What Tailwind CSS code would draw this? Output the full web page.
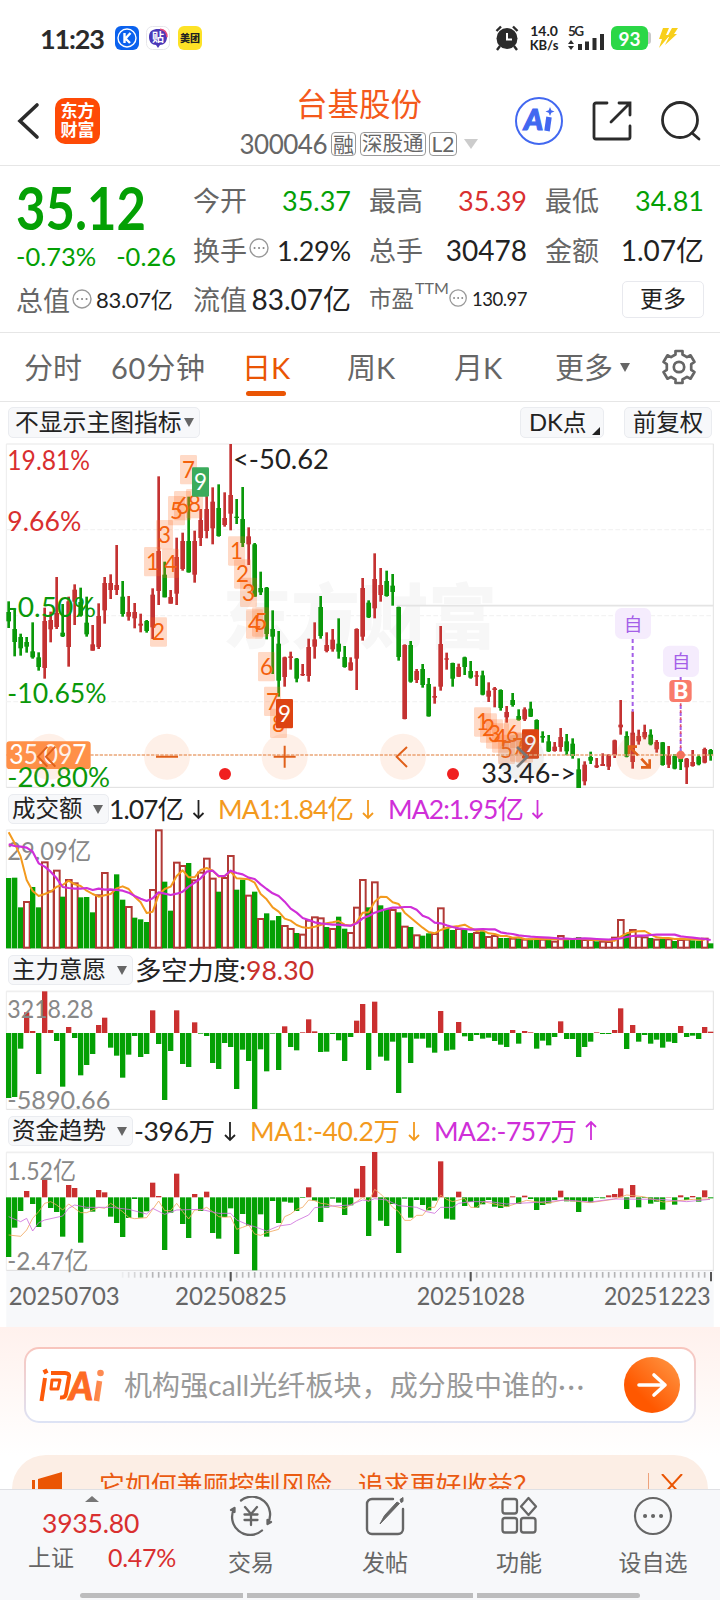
<!DOCTYPE html>
<html lang="zh-CN">

<head>
    <meta charset="UTF-8" />
    <meta name="viewport" content="width=device-width, initial-scale=1.0" />
    <title>台基股份 300046</title>
    <script src="https://cdn.jsdelivr.net/npm/@tailwindcss/browser@4"></script>
</head>

<body class="bg-white">
    <div class="relative flex flex-col w-[720px] h-[1600px] overflow-hidden bg-white text-[#222] font-[family-name:Lato,'Noto_Sans_CJK_SC',sans-serif] leading-none whitespace-nowrap">

        <!-- status bar -->
        <div class="status-bar flex items-center h-[76px] pl-[40px] pr-[41px] shrink-0">
            <span class="text-[27px] font-bold tracking-[-1.200px] w-[75px] text-[#2b2b2b]">11:23</span>
            <svg class="w-6 h-6" viewBox="0 0 24 24">
                <rect width="24" height="24" rx="6" fill="#0b62ee" />
                <circle cx="12" cy="12" r="9" fill="none" stroke="#fff" stroke-width="1.4" />
                <path d="M9.500 7v10M15.500 7l-5 5.500 4.500 4.500" fill="none" stroke="#fff" stroke-width="2.4" />
            </svg>
            <svg class="w-6 h-6 ml-[7px]" viewBox="0 0 24 24">
                <rect x=".5" y=".5" width="23" height="23" rx="6" fill="#fff" stroke="#e6e6ea" />
                <path d="M12 3c5 0 9 2 9 8 0 5-3 8-7 8l-2 3-2-3c-4 0-7-3-7-8 0-6 4-8 9-8z" fill="#4b38b8" />
                <path d="M14 3.200c5 .4 7 3 7 8" fill="none" stroke="#e2477c" stroke-width="1.500" />
                <text x="12" y="15.500" font-size="12" font-weight="700" text-anchor="middle" fill="#fff">贴</text>
            </svg>
            <div class="flex items-center justify-center w-6 h-6 ml-[8px] rounded-[6px] bg-[#fde226] text-[10px] font-black">美团</div>
            <div class="flex items-center ml-auto">
                <svg class="w-6 h-[26px]" viewBox="0 0 24 26">
                    <path d="M1.500 6L6 1.500M22.500 6L18 1.500M5 21l-3 4M19 21l3 4" stroke="#2b2b2b" stroke-width="2.400" />
                    <circle cx="12" cy="13.500" r="10.500" fill="#2b2b2b" />
                    <path d="M12 8v6.500h5" fill="none" stroke="#fff" stroke-width="2" />
                </svg>
                <div class="flex flex-col items-center w-[32px] ml-[9px] text-[14px] leading-[14px] font-bold">
                    <span>14.0</span><span class="text-[13px]">KB/s</span>
                </div>
                <svg class="w-[38px] h-[26px] ml-[8px] overflow-visible" viewBox="0 0 38 26">
                    <text x="0" y="11" font-size="13.500" font-weight="700" fill="#2b2b2b" textLength="16">5G</text>
                    <path d="M0 19l3-4 3 4zM0 21l3 4 3-4z" fill="#2b2b2b" />
                    <path d="M12 19v6M19 16.500v8.500M26.500 13v12M34 9v16" stroke="#2b2b2b" stroke-width="4" />
                </svg>
                <div class="flex items-center ml-[5px]">
                    <div class="flex items-center justify-center w-[37px] h-6 rounded-[6px] bg-[#2bd747] text-white text-[19px] font-bold">93</div>
                    <div class="w-[3px] h-3 bg-[#c9c9c9] rounded-r"></div>
                </div>
                <svg class="w-5 h-5 ml-[8px]" viewBox="0 0 20 20">
                    <path d="M4 0h6L7 7h4L0 20l3-9H0zM13 0h6l-4 6h3L6 17l4-8H8z" fill="#f8cf1b" />
                </svg>
            </div>
        </div>

        <!-- title bar -->
        <header class="relative flex items-center h-[90px] shrink-0 border-b border-[#e6e6e6] pl-[16px] pr-[19px]">
            <svg class="w-[24px] h-[40px]" viewBox="0 0 24 40" fill="none" stroke="#2b2b2b" stroke-width="3.600" stroke-linecap="round">
                <path d="M21 4L4 20l17 16" />
            </svg>
            <div class="flex flex-col items-center justify-center gap-px w-[45px] h-[46px] ml-[15px] rounded-[10px] bg-[#fe4a06] text-white font-bold text-[17px] leading-[18px]">
                <span>东方</span><span>财富</span>
            </div>
            <div class="flex flex-col items-center w-[240px] ml-[139px] mt-px">
                <h1 class="text-[31.500px] leading-[36px] text-[#f4591b]">台基股份</h1>
                <div class="flex items-center mt-[9px] h-[26px] text-[#666]">
                    <span class="text-[26px] mr-[4px] tracking-[-0.500px]">300046</span>
                    <span class="border border-[#999] rounded-[4px] text-[21px] px-px h-6 leading-[21px]">融</span>
                    <span class="border border-[#999] rounded-[4px] text-[20.500px] px-px h-6 leading-[21px] ml-1">深股通</span>
                    <span class="border border-[#999] rounded-[4px] text-[21px] px-[2px] h-6 leading-[22px] ml-[3px]">L2</span>
                    <svg class="w-[14px] h-[10px] ml-[7px]" viewBox="0 0 14 10"><path d="M0 0h14L7 10z" fill="#ccc" /></svg>
                </div>
            </div>
            <svg class="w-[48px] h-[48px] ml-auto" viewBox="0 0 48 48">
                <circle cx="24" cy="24" r="23" fill="none" stroke="#4268f0" stroke-width="2" />
                <text x="9" y="33" font-size="28" font-weight="900" font-style="italic" fill="#4268f0" stroke="#4268f0" stroke-width="1.200" textLength="19" lengthAdjust="spacingAndGlyphs">A</text>
                <path d="M34 20l-2 14" stroke="#4268f0" stroke-width="5.500" />
                <path d="M35 10l1.300 3.200 3.200 1.300-3.200 1.300-1.300 3.200-1.300-3.200-3.200-1.300 3.200-1.300z" fill="#4268f0" />
            </svg>
            <svg class="w-[40px] h-[40px] ml-[29px]" viewBox="0 0 40 40" fill="none" stroke="#2b2b2b" stroke-width="2.800" stroke-linecap="round">
                <path d="M15 2H4a2 2 0 0 0-2 2v32a2 2 0 0 0 2 2h32a2 2 0 0 0 2-2V25M27 2h11v12M37 3L19 21" />
            </svg>
            <svg class="w-[40px] h-[40px] ml-[29px]" viewBox="0 0 40 40" fill="none" stroke="#2b2b2b" stroke-width="2.800" stroke-linecap="round">
                <circle cx="19" cy="19" r="17.500" /><path d="M31 32l7 6" />
            </svg>
        </header>

        <!-- quote -->
        <section class="flex h-[167px] shrink-0 border-b border-[#e6e6e6] pl-[16px] pr-[16px] text-[27px] text-[#666]">
            <div class="w-[160px] mr-[17px]">
                <svg class="block w-[160px] h-[60px] mt-[14px]" viewBox="0 0 160 60">
                    <text x="0" y="50" font-size="60" font-weight="700" fill="#04a004" textLength="130" lengthAdjust="spacingAndGlyphs">35.12</text>
                </svg>
                <div class="flex justify-between items-center h-[30px] mt-[2px] text-[#04a004] text-[25.500px]"><span>-0.73%</span><span>-0.26</span></div>
                <div class="flex items-center h-[40px] mt-[8px]">
                    <span>总值</span>
                    <svg class="w-5 h-5 ml-[2px] mr-[4px] mb-[3px]" viewBox="0 0 20 20"><circle cx="10" cy="10" r="9" fill="none" stroke="#999" stroke-width="1.400" /><path d="M5.500 10h.1M10 10h.1M14.500 10h.1" stroke="#888" stroke-width="2" stroke-linecap="round" /></svg>
                    <span class="text-[22px] tracking-[-0.300px] text-[#222]">83.07亿</span>
                </div>
            </div>
            <div class="w-[158px] mr-[18px]">
                <div class="flex justify-between items-center h-[50px] mt-[9px]"><span>今开</span><span class="text-[#04a004]">35.37</span></div>
                <div class="flex justify-between items-center h-[50px]">
                    <span class="flex items-center">换手<svg class="w-5 h-5 ml-[2px] mb-[4px]" viewBox="0 0 20 20"><circle cx="10" cy="10" r="9" fill="none" stroke="#999" stroke-width="1.400" /><path d="M5.500 10h.1M10 10h.1M14.500 10h.1" stroke="#888" stroke-width="2" stroke-linecap="round" /></svg></span>
                    <span class="text-[#222] tracking-[-0.200px]">1.29%</span>
                </div>
                <div class="flex justify-between items-center h-[48px]"><span>流值</span><span class="text-[#222] text-[28px]">83.07亿</span></div>
            </div>
            <div class="w-[158px] mr-[18px]">
                <div class="flex justify-between items-center h-[50px] mt-[9px]"><span>最高</span><span class="text-[#d92f2f]">35.39</span></div>
                <div class="flex justify-between items-center h-[50px]"><span>总手</span><span class="text-[#222] text-[28px]">30478</span></div>
                <div class="flex items-center h-[48px]">
                    <span class="text-[22.500px]">市盈</span>
                    <span class="text-[16px] mb-[22px] ml-px">TTM</span>
                    <svg class="w-5 h-5 ml-0 mr-[5px] mb-[2px]" viewBox="0 0 20 20"><circle cx="10" cy="10" r="9" fill="none" stroke="#999" stroke-width="1.400" /><path d="M5.500 10h.1M10 10h.1M14.500 10h.1" stroke="#888" stroke-width="2" stroke-linecap="round" /></svg>
                    <span class="text-[18.500px] text-[#222] tracking-[-0.500px]">130.97</span>
                </div>
            </div>
            <div class="flex-1">
                <div class="flex justify-between items-center h-[50px] mt-[9px]"><span>最低</span><span class="text-[#04a004]">34.81</span></div>
                <div class="flex justify-between items-center h-[50px]"><span>金额</span><span class="text-[#222] text-[28px]">1.07亿</span></div>
                <div class="flex items-center justify-center w-[82px] h-[37px] ml-auto mt-[6px] pb-[2px] border border-[#e8e9ee] rounded-[5px] text-[23px] text-[#222]">更多</div>
            </div>
        </section>

        <!-- period tabs -->
        <nav class="relative flex items-center h-[69px] shrink-0 border-b border-[#e6e6e6] pl-[24px] text-[29px] text-[#666]">
            <span class="w-[87px]">分时</span>
            <span class="w-[131px] tracking-[0.800px]">60分钟</span>
            <span class="relative w-[105px] text-[#ea5504]">日K<i class="absolute left-[4px] top-[38px] w-10 h-[5px] rounded-full bg-[#ea5504]"></i></span>
            <span class="w-[107px]">周K</span>
            <span class="w-[101px]">月K</span>
            <span class="flex items-center w-[106px]">更多<svg class="w-[10px] h-[9px] ml-[7px]" viewBox="0 0 10 9"><path d="M0 0h10L5 9z" fill="#666" /></svg></span>
            <svg class="w-[36px] h-[36px]" viewBox="0 0 36 36" fill="none" stroke="#666" stroke-width="2.700" stroke-linejoin="round">
                <path d="M14.500 2h7v3.500l4.500 2.600 3.500-1.800 4 6.700-3.300 2.200v5.600l3.300 2.200-4 6.700-3.500-1.800-4.500 2.600V34h-7v-3.500L10 27.900l-3.500 1.800-4-6.700 3.300-2.200v-5.600L2.500 13l4-6.700L10 8.100l4.500-2.600z" />
                <circle cx="18" cy="18" r="5.200" />
            </svg>
        </nav>

        <!-- chart toolbar -->
        <div class="flex items-center h-[38px] shrink-0 px-2 pt-[5px] pb-[2px] text-[23.800px]">
            <div class="flex items-center w-[192px] h-[31px] pl-[6px] border border-[#eaecf0] rounded-[5px] bg-[#f7f8fa]">不显示主图指标<svg class="w-[10px] h-[9px] ml-[2px]" viewBox="0 0 10 9"><path d="M0 0h10L5 9z" fill="#666" /></svg></div>
            <div class="flex items-center w-[84px] h-[31px] ml-auto pl-[8px] border border-[#eaecf0] rounded-[5px] bg-[#f7f8fa]">DK点<svg class="w-2 h-2 ml-[5px] mt-[17px]" viewBox="0 0 8 8"><path d="M8 0v8H0z" fill="#222" /></svg></div>
            <div class="flex items-center justify-center w-[88px] h-[31px] ml-5 border border-[#eaecf0] rounded-[5px] bg-[#f7f8fa] text-[23.500px]">前复权</div>
        </div>

        <!-- candles, drawn at three units to the pixel -->
        <svg id="price" class="block w-[720px] h-[350px] shrink-0" viewBox="0 30 2160 1050"></svg>

        <div class="flex items-center h-[36px] shrink-0 pl-2 pt-[2px] text-[26.500px]">
            <div class="flex items-center justify-between w-[101px] h-[30px] pl-[3px] pr-[5px] border border-[#eaecf0] rounded-[5px] bg-[#f7f8fa] text-[23.500px]">成交额<svg class="w-[10px] h-[9px]" viewBox="0 0 10 9"><path d="M0 0h10L5 9z" fill="#666" /></svg></div>
            <svg class="w-[600px] h-[36px] overflow-visible" viewBox="109 0 600 36">
                <text x="109" y="28" textLength="75" fill="#222">1.07亿</text>
                <text x="218" y="28" textLength="136" fill="#f39a1e">MA1:1.84亿</text>
                <text x="388" y="28" textLength="136" fill="#cf2fd8">MA2:1.95亿</text>
                <g fill="none" stroke-width="1.800">
                    <path d="M198.500 9v18M193.500 22l5 5 5-5" stroke="#222" />
                    <path d="M368 9v18M363 22l5 5 5-5" stroke="#f39a1e" />
                    <path d="M537.500 9v18M532.500 22l5 5 5-5" stroke="#cf2fd8" />
                </g>
            </svg>
        </div>
        <svg id="volume" class="block w-[720px] h-[124px] shrink-0" viewBox="0 108 2160 372"></svg>

        <div class="flex items-center h-[37px] shrink-0 pl-2 pt-[3px] text-[26.500px]">
            <div class="flex items-center justify-between w-[125px] h-[30px] pl-[3px] pr-[5px] border border-[#eaecf0] rounded-[5px] bg-[#f7f8fa] text-[23.500px]">主力意愿<svg class="w-[10px] h-[9px]" viewBox="0 0 10 9"><path d="M0 0h10L5 9z" fill="#666" /></svg></div>
            <svg class="w-[500px] h-[36px] overflow-visible" viewBox="133 0 500 36">
                <text x="135" y="28" textLength="111" fill="#222">多空力度:</text>
                <text x="246" y="28" textLength="68" fill="#c9302c">98.30</text>
            </svg>
        </div>
        <svg id="force" class="block w-[720px] h-[125px] shrink-0" viewBox="0 111 2160 375"></svg>

        <div class="flex items-center h-[36px] shrink-0 pl-2 pt-[2px] text-[26.500px]">
            <div class="flex items-center justify-between w-[125px] h-[30px] pl-[3px] pr-[5px] border border-[#eaecf0] rounded-[5px] bg-[#f7f8fa] text-[23.500px]">资金趋势<svg class="w-[10px] h-[9px]" viewBox="0 0 10 9"><path d="M0 0h10L5 9z" fill="#666" /></svg></div>
            <svg class="w-[580px] h-[36px] overflow-visible" viewBox="133 0 580 36">
                <text x="134" y="28" textLength="81" fill="#222">-396万</text>
                <text x="250" y="28" textLength="150" fill="#f39a1e">MA1:-40.2万</text>
                <text x="434" y="28" textLength="143" fill="#cf2fd8">MA2:-757万</text>
                <g fill="none" stroke-width="1.800">
                    <path d="M230 9v18M225 22l5 5 5-5" stroke="#222" />
                    <path d="M414 9v18M409 22l5 5 5-5" stroke="#f39a1e" />
                    <path d="M591 27V9M586 14l5-5 5 5" stroke="#cf2fd8" />
                </g>
            </svg>
        </div>
        <svg id="fund" class="block w-[720px] h-[179px] shrink-0" viewBox="0 84 2160 537"></svg>

        <!-- ask AI -->
        <section class="h-[128px] shrink-0 px-6 pt-[20px] bg-linear-to-b from-[#fff1ed] to-white">
            <div class="h-[76px] rounded-[15px] p-[2px] bg-linear-to-b from-[#f8c5bd] to-[#dde3f5]">
                <div class="flex items-center h-full rounded-[13px] bg-white pl-[12px] pr-[14px]">
                    <svg class="w-[68px] h-[34px]" viewBox="0 0 68 34">
                        <defs><linearGradient id="ask" gradientUnits="userSpaceOnUse" x1="0" x2="68"><stop offset=".5" stop-color="#fd5a0a" /><stop offset="1" stop-color="#fd9560" /></linearGradient></defs>
                        <g fill="none" stroke="url(#ask)" stroke-width="4" stroke-linejoin="round">
                            <path d="M7 10L3.500 33M13 5h14q4.500 0 4 4l-3 17q-.7 4-6 3.500" />
                            <path d="M6.500 1.500l2 4" stroke-width="4.500" />
                            <path d="M14 12h8l-2 9h-7z" stroke-width="3" />
                            <path d="M61.500 13l-3 20" stroke-width="5.500" />
                        </g>
                        <text x="31" y="32" font-size="38" font-weight="900" font-style="italic" fill="#fd6a24" stroke="#fd6a24" textLength="24" lengthAdjust="spacingAndGlyphs">A</text>
                        <circle cx="62.500" cy="5" r="3.300" fill="#fd8a52" />
                    </svg>
                    <span class="text-[28px] text-[#999] ml-[18px] tracking-[0.100px]">机构强call光纤板块，成分股中谁的<span class="tracking-[2px]">···</span></span>
                    <svg class="w-[56px] h-[56px] ml-auto" viewBox="0 0 56 56">
                        <defs><linearGradient id="go" x1="1" y1="0" x2=".3" y2=".7"><stop offset="0" stop-color="#ff9a48" /><stop offset="1" stop-color="#ff5800" /></linearGradient></defs>
                        <circle cx="28" cy="28" r="28" fill="url(#go)" />
                        <path d="M15 28h26M30 18l11 10-11 10" fill="none" stroke="#fff" stroke-width="3.600" stroke-linecap="round" stroke-linejoin="round" />
                    </svg>
                </div>
            </div>
        </section>

        <!-- promo strip, its lower half runs under the bottom bar -->
        <div class="flex items-start h-[34px] shrink-0 mx-3 overflow-hidden rounded-t-[34px] bg-[#fceee5] text-[#ea5a10]">
            <svg class="w-[32px] h-[34px] ml-[19px] shrink-0" viewBox="0 0 32 34"><path d="M1 25h3v9H1zM7 24l24-7v17H7z" fill="#ea5504" /></svg>
            <span class="text-[25.900px] leading-[30px] mt-[15px] ml-[36px]">它如何兼顾控制风险，追求更好收益？</span>
            <i class="w-px h-4 mt-[18px] ml-auto bg-[#eda27c]"></i>
            <svg class="w-[22px] h-[22px] mt-[19px] ml-[12px] mr-[25px] shrink-0" viewBox="0 0 22 22"><path d="M1 0l20 22M21 0L1 22" stroke="#ea5504" stroke-width="2" /></svg>
        </div>

        <!-- bottom bar -->
        <footer class="flex flex-col h-[111px] shrink-0 border-t border-[#dfe0e4] bg-[#f7f8fa]">
            <div class="flex h-[98px] text-[23px] text-[#666]">
                <div class="relative flex flex-col w-[184px] pl-[28px] pt-[20px]">
                    <svg class="absolute left-[85px] top-[6px] w-[14px] h-[6px]" viewBox="0 0 14 6"><path d="M0 6l7-6 7 6z" fill="#777" /></svg>
                    <span class="text-[#d92f2f] text-[26.500px] ml-[14px] tracking-[-0.200px]">3935.80</span>
                    <div class="flex items-center mt-[8px]"><span>上证</span><span class="text-[#d92f2f] text-[25px] tracking-[-0.300px] ml-[34px]">0.47%</span></div>
                </div>
                <div class="flex flex-col items-center w-[134px] pt-[6px] gap-[15px]">
                    <svg class="w-[44px] h-[40px]" viewBox="0 0 44 40" fill="none" stroke="#666" stroke-width="2.300" stroke-linecap="round" stroke-linejoin="round">
                        <path d="M12 4.500A18 18 0 0 1 38.500 28l3.500-2M38.500 28v-4" />
                        <path d="M33 34.500A18 18 0 0 1 5.500 12L2 14M5.500 12v4" />
                        <path d="M16 11l6 7 6-7M22 18v11M15.500 18.500h13M15.500 24h13" />
                    </svg>
                    <span>交易</span>
                </div>
                <div class="flex flex-col items-center w-[134px] pt-[6px] gap-[15px]">
                    <svg class="w-[40px] h-[40px]" viewBox="0 0 40 40" fill="none" stroke="#666" stroke-width="2.400">
                        <path d="M28 3H7a5 5 0 0 0-5 5v25a5 5 0 0 0 5 5h26a5 5 0 0 0 5-5V13" stroke-linecap="round" />
                        <path d="M34.500 7.500L15 28l4.500-8.500L32 6zM35 3.500l3-2v4l-2 1z" fill="#666" stroke-width="1" />
                    </svg>
                    <span>发帖</span>
                </div>
                <div class="flex flex-col items-center w-[134px] pt-[6px] gap-[15px]">
                    <svg class="w-[40px] h-[40px]" viewBox="0 0 40 40" fill="none" stroke="#666" stroke-width="2.300" stroke-linejoin="round">
                        <rect x="3.500" y="3" width="14.500" height="14.500" rx="2.500" /><rect x="3.500" y="22" width="14.500" height="14.500" rx="2.500" /><rect x="22" y="22" width="14.500" height="14.500" rx="2.500" />
                        <path d="M29.500 2L37 10.500l-7.500 8.500L22 10.500z" />
                    </svg>
                    <span>功能</span>
                </div>
                <div class="flex flex-col items-center w-[134px] pt-[6px] gap-[15px]">
                    <svg class="w-[40px] h-[40px]" viewBox="0 0 40 40" fill="none" stroke="#666" stroke-width="2.200" stroke-linecap="round">
                        <circle cx="20" cy="20" r="18" /><path d="M12 20h.1M20 20h.1M28 20h.1" stroke-width="4" />
                    </svg>
                    <span>设自选</span>
                </div>
            </div>
            <div class="flex gap-1 mt-[5px] px-[80px]">
                <i class="w-[163px] h-[5px] rounded-l-full bg-[#bcbcbd]"></i>
                <i class="w-[226px] h-[5px] bg-[#bcbcbd]"></i>
                <i class="w-[163px] h-[5px] rounded-r-full bg-[#bcbcbd]"></i>
            </div>
        </footer>
    </div>

    <script>
        const RED = '#c43232', GREEN = '#0a980a', STEP = 18;
        const cx = i => 26 + i * STEP;
        const rect = (x, y, w, h, fill, extra = '') => `<rect x="${x}" y="${y}" width="${w}" height="${h}" fill="${fill}" ${extra}/>`;
        const line = (x1, y1, x2, y2, stroke, w = 3, extra = '') => `<path d="M${x1} ${y1}L${x2} ${y2}" stroke="${stroke}" stroke-width="${w}" ${extra}/>`;
        const text = (s, x, y, w, fill, size = 78, extra = '') => `<text x="${x}" y="${y}" textLength="${w}" lengthAdjust="spacingAndGlyphs" font-size="${size}" fill="${fill}" ${extra}>${s}</text>`;
        const frame = (top, bottom) => line(19, top, 2141, top, '#efefef', 5) + line(19, top, 19, bottom, '#ececec') + line(2140, top, 2140, bottom, '#e2e2e2') + line(19, bottom, 2141, bottom, '#dedede');

        // colour, high, body top, body bottom, low
        const candles = `g514,546,574,594 g538,597,636,679 g611,621,655,677 g621,636,650,668 g577,664,682,686 g667,682,711,722 r533,573,714,746 r545,570,598,637 r441,549,591,597 g522,608,619,621 r500,514,651,710 r463,479,515,585
            g473,516,557,560 g500,578,613,620 r585,643,662,662 r520,558,651,657 r441,459,541,581 r433,459,480,507 r345,465,480,495 g453,500,552,560 r498,546,560,572 r519,546,565,595 r551,581,587,607 g570,573,603,608
            r475,494,592,627 r139,363,483,525 g395,434,502,502 r480,501,521,521 r323,381,491,525 r308,333,417,422 g200,333,427,428 r302,333,434,458 r237,270,324,348 r190,237,303,325 r172,215,295,343 g163,234,318,320
            r187,264,285,290 r42,195,251,301 g207,260,264,282 g171,267,339,351 r292,319,343,405 g339,343,500,500 g425,474,487,495 g471,473,612,628 g541,597,620,732 g603,641,752,800 r680,682,741,770 r665,679,684,719
            g684,686,746,757 r702,732,736,738 r626,651,738,755 r577,628,650,686 g498,531,618,626 r607,645,663,667 r597,629,658,665 g565,641,665,686 g648,681,711,713 r682,697,721,722 r595,597,686,780 r444,474,620,632
            g511,518,562,564 r370,447,535,565 r414,465,495,515 g422,453,498,500 g432,467,486,527 g530,531,681,692 r643,645,867,868 g633,645,755,758 r717,723,750,759 g702,717,765,773 g744,762,859,860 r770,798,803,821
            r588,642,770,782 r668,685,689,719 g698,699,746,770 r701,711,740,741 g680,682,711,735 g693,723,743,746 r723,736,740,768 g722,736,794,796 r757,782,800,816 r771,775,780,832 g778,780,834,842 r828,846,862,878
            g789,810,825,830 g838,858,870,872 r832,838,868,873 g815,836,860,861 g868,870,905,905 g904,918,923,938 g915,934,964,966 r936,950,963,965 r894,921,951,965 g912,934,964,976 g925,941,978,986 g985,1018,1074,1074
            r994,1004,1054,1066 g965,981,992,1002 r984,1006,1012,1014 r970,1002,1008,1008 r972,975,1010,1020 r929,931,976,984 r810,884,892,914 g904,918,980,982 r844,908,996,1016 r899,918,934,944 r884,906,922,928 g898,914,943,946
            r930,936,958,968 g936,937,1005,1007 r948,975,1004,1014 g972,978,1016,1018 g962,984,996,1020 r984,986,1012,1062 r960,996,1008,1010 g974,980,1003,1006 r953,957,998,1000 g957,960,976,992`.trim().split(/\s+/);

        let out = frame(42, 1072);
        out += [299, 557, 815].map(y => line(19, y, 2140, y, '#f3f3f3', 4, 'stroke-dasharray="14 7"')).join('');
        out += text('东方财富', 668, 638, 822, '#f7f7f7', 210, 'font-weight="900"');
        out += line(1190, 527, 2140, 527, '#e4e4e4', 5);
        out += candles.map((c, i) => {
            const col = c[0] === 'r' ? RED : GREEN;
            const [hi, top, bot, lo] = c.slice(1).split(',').map(Number);
            return rect(cx(i) - 4, hi, 8, lo - hi, col) + rect(cx(i) - 7, top, 14, bot - top, col);
        }).join('');

        // nine-turn counters
        const nine = (start, tops, last) => tops.map((y, k) => {
            const x = start + k * STEP;
            return k < 8
                ? rect(x, y, 51, 88, '#ff6a20', 'fill-opacity=".25" rx="4"') + text(k + 1, x + 6, y + 69, 39, '#f4600c', 70)
                : rect(x, y, 51, 88, last, 'rx="4"') + text(9, x + 6, y + 69, 39, '#fff', 70);
        }).join('');
        out += nine(432, [351, 562, 270, 356, 198, 183, 75, 177, 112], '#3bab5c');
        out += nine(684, [319, 388, 443, 538, 532, 666, 770, 836, 807], '#dd4312');
        out += nine(1422, [832, 850, 868, 880, 914, 866, 907, 910, 898], '#dd4312');

        out += text('19.81%', 22, 120, 248, '#d92f2f') + text('9.66%', 22, 303, 222, '#d92f2f');
        out += text('-0.50%', 22, 561, 266, GREEN) + text('-10.65%', 22, 819, 298, GREEN);
        out += line(19, 975, 2140, 975, '#eaa678', 4, 'stroke-dasharray="10 4"');
        out += rect(19, 934, 253, 83, '#ff9048', 'rx="10"') + text('35.097', 28, 1003, 232, '#fff') + text('-20.80%', 22, 1071, 308, GREEN);
        [148, 501, 854, 1209, 1563, 1917].forEach(x => {
            out += `<circle cx="${x}" cy="980" r="69" fill="${x === 1563 ? '#888' : '#f98a4a'}" fill-opacity=".13"/>`;
        });
        out += `<g fill="none" stroke="#e0601a" stroke-width="6">
            <path d="M142 950l-28 30 28 30M166 950l-28 30 28 30M468 980h66M821 980h66M854 947v66M1221 951l-31 29 31 31"/>
            <path d="M1551 951l31 29-31 31" stroke="#777" stroke-width="8"/>
            <path d="M1914 976l-26-26M1887 972v-22h24M1924 986l24 26M1949 988v24h-26" stroke-width="8"/></g>`;
        out += '<circle cx="675" cy="1032" r="18" fill="#f02020"/><circle cx="1359" cy="1032" r="18" fill="#f02020"/>';
        out += text('&lt;-50.62', 699, 117, 288, '#222') + text('33.46-&gt;', 1444, 1060, 284, '#222');
        out += line(1898, 627, 1898, 845, '#a45fe8', 6, 'stroke-dasharray="12 9"') + line(2042, 741, 2042, 965, '#a45fe8', 6, 'stroke-dasharray="12 9"') + line(2042, 820, 2042, 965, '#e0506a', 5, 'stroke-dasharray="8 13"');
        out += rect(1845, 534, 108, 93, '#f5ecfd', 'rx="20"') + text('自', 1871, 602, 56, '#a45fe8', 56);
        out += rect(1989, 647, 108, 94, '#f5ecfd', 'rx="20"') + text('自', 2015, 715, 56, '#a45fe8', 56);
        out += rect(2008, 750, 67, 66, '#f97b6b', 'rx="12"') + text('B', 2019, 806, 46, '#fff', 66, 'font-weight="900"');
        out += '<circle cx="2042" cy="975" r="13" fill="#f4705a"/>';
        document.getElementById('price').innerHTML = out;

        const poly = (ys, stroke, w) => `<polyline points="${ys.map((y, i) => cx(i) + ',' + y).join(' ')}" fill="none" stroke="${stroke}" stroke-width="${w}" stroke-linejoin="round"/>`;
        const path = (pts, stroke, w) => `<polyline points="${pts}" fill="none" stroke="${stroke}" stroke-width="${w}" stroke-linejoin="round"/>`;

        // turnover
        const volume = [264, 263, 352, 336, 291, 352, 217, 304, 242, 320, 270, 280, 322, 321, 367, 316, 249, 300, 253, 329, 351, 383, 388, 396, 300, 121, 275, 362, 218, 228, 219, 271, 248, 206, 266, 305, 264, 198, 299, 269, 317, 305, 387, 370, 391, 378, 408, 417, 429, 434, 392, 382, 385, 411, 417, 380, 416, 429, 353,
            270, 352, 277, 346, 357, 360, 367, 410, 411, 436, 437, 430, 432, 355, 413, 420, 417, 417, 429, 429, 424, 441, 438, 444, 444, 446, 445, 449, 446, 446, 449, 446, 455, 438, 446, 449, 441, 450, 450, 454, 455, 456, 443, 390, 430, 420, 440, 442, 444, 449, 446, 448, 453, 450, 449, 451, 452, 446, 460];
        const volRed = [3, 6, 7, 8, 10, 11, 15, 16, 17, 20, 24, 25, 28, 29, 31, 32, 33, 34, 36, 37, 40, 42, 46, 47, 49, 50, 51, 52, 54, 57, 58, 59, 61, 64, 66, 68, 71, 72, 75, 78, 80, 81, 84, 86, 89, 91, 92, 96, 97, 99, 100, 101, 102, 104, 105, 106, 108, 110, 112, 113, 116];
        const ma1 = [127, 160, 200, 270, 303, 318, 312, 305, 290, 285, 272, 283, 288, 302, 312, 320, 316, 312, 295, 289, 297, 320, 337, 369, 365, 315, 297, 290, 258, 241, 262, 262, 240, 234, 242, 260, 258, 245, 265, 266, 268, 278, 312, 328, 352, 365, 386, 392, 405, 412, 414, 410, 405, 400, 397, 393, 404, 407, 397,
            368, 367, 335, 320, 321, 337, 342, 368, 383, 398, 413, 426, 430, 420, 414, 410, 408, 404, 414, 423, 421, 430, 432, 438, 438, 443, 442, 447, 448, 447, 447, 448, 448, 448, 448, 447, 446, 447, 449, 450, 451, 452, 452, 440, 430, 425, 424, 423, 433, 442, 444, 444, 447, 446, 448, 448, 449, 449];
        const ma2 = [163, 168, 170, 173, 185, 220, 230, 245, 265, 291, 294, 296, 296, 294, 300, 296, 299, 298, 300, 302, 308, 318, 326, 333, 325, 307, 311, 315, 311, 305, 290, 278, 265, 245, 242, 258, 258, 242, 249, 253, 263, 267, 283, 297, 310, 318, 335, 356, 368, 384, 390, 397, 400, 402, 404, 404, 406, 407, 400,
            385, 378, 368, 362, 357, 353, 353, 351, 351, 359, 377, 384, 398, 400, 406, 411, 415, 417, 419, 418, 417, 418, 418, 427, 430, 432, 436, 438, 440, 441, 442, 443, 444, 446, 446, 447, 446, 445, 446, 447, 448, 449, 447, 445, 441, 438, 437, 437, 435, 434, 434, 434, 434, 439, 441, 443, 445, 447, 450];
        out = frame(120, 475);
        out += volume.map((y, i) => volRed.includes(i)
            ? rect(cx(i) - 8, y, 17, 473 - y, '#fff', 'stroke="#b23a36" stroke-width="6"')
            : rect(cx(i) - 8, y, 16, 475 - y, '#04a004')).join('');
        out += text('29.09亿', 22, 210, 252, '#888', 76);
        out += poly(ma1, '#f39a1e', 6) + poly(ma2, '#cf2fd8', 6.5);
        document.getElementById('volume').innerHTML = out;

        const bars = (ys, zero) => ys.map((y, i) => y < zero
            ? rect(cx(i) - 8, y, 16, zero - y, '#ca3030')
            : rect(cx(i) - 8, zero, 16, y - zero, '#04a004')).join('');

        // long/short strength
        const force = [444, 441, 296, 187, 243, 372, 124, 240, 273, 410, 231, 264, 376, 345, 312, 225, 203, 293, 317, 383, 314, 258, 321, 312, 181, 282, 450, 303, 181, 342, 351, 217, 251, 258, 339, 357, 279, 291, 417, 299, 333, 477, 298, 364, 251, 360, 229, 291, 301, 247, 208, 244, 306, 305, 252, 271, 333, 261, 212,
            162, 360, 155, 320, 332, 275, 429, 263, 339, 266, 266, 293, 308, 183, 302, 299, 216, 259, 273, 255, 266, 263, 273, 284, 291, 240, 281, 243, 247, 296, 272, 286, 261, 214, 267, 267, 321, 291, 275, 247, 252, 252, 240, 175, 297, 225, 275, 255, 281, 269, 293, 275, 279, 228, 261, 257, 267, 231, 245];
        document.getElementById('force').innerHTML = frame(124, 478) + bars(force, 249)
            + text('3218.28', 22, 203, 258, '#888', 76) + text('-5890.66', 22, 477, 309, '#888', 76);

        // capital trend and date axis
        const fund = [411, 323, 273, 213, 252, 321, 177, 264, 276, 350, 195, 204, 368, 266, 275, 210, 217, 290, 309, 351, 294, 237, 293, 274, 188, 228, 390, 278, 161, 312, 354, 222, 273, 215, 339, 356, 291, 265, 402, 282, 317, 451, 283, 350, 243, 309, 245, 248, 273, 234, 202, 242, 306, 263, 236, 248, 285, 256, 206,
            138, 348, 96, 302, 318, 252, 399, 236, 293, 240, 255, 271, 242, 124, 296, 299, 215, 258, 246, 263, 253, 240, 260, 264, 260, 229, 252, 227, 237, 270, 255, 250, 240, 212, 244, 244, 276, 243, 247, 234, 235, 226, 222, 205, 267, 195, 262, 234, 251, 245, 269, 231, 254, 226, 240, 228, 245, 211, 235];
        out = rect(19, 451, 2122, 170, '#f7f8fa') + frame(97, 451) + bars(fund, 232);
        out += text('1.52亿', 22, 180, 206, '#888', 76) + text('-2.47亿', 22, 451, 244, '#888', 76);
        out += path('26,345 62,349 80,330 98,295 116,275 134,250 152,245 170,255 188,270 206,252 224,265 242,278 260,278 278,270 296,262 314,265 332,250 350,262 368,275 386,292 404,296 440,293 458,268 476,243 494,272 512,272 530,250 548,275 566,297 584,270 602,270 620,262 638,275 656,290 674,292 692,290 710,328 728,322 746,315 764,342 782,346 800,338 836,328 854,290 872,282 890,268 908,262 926,240 944,242 962,250 980,252 998,258 1034,265 1070,245 1088,232 1106,245 1124,208 1142,222 1160,240 1178,262 1196,275 1214,301 1232,301 1250,286 1268,286 1286,262 1304,262 1322,225 1340,238 1358,245 1394,235 1412,262 1430,262 1450,245 1520,260 1580,241 1640,250 1690,240 1770,248 1840,238 1880,225 1930,230 1990,246 2080,238 2130,237', '#f0a860', 2.5);
        out += path('26,290 62,305 80,295 98,333 116,308 134,300 188,288 206,265 224,255 260,262 332,262 386,268 440,282 458,265 494,283 530,270 602,268 656,280 692,280 710,300 746,315 764,320 800,333 836,318 872,313 890,302 926,285 944,263 998,258 1052,255 1070,247 1088,240 1106,243 1124,236 1160,240 1196,257 1250,262 1280,275 1304,280 1322,262 1358,262 1376,250 1412,245 1470,245 1520,252 1610,247 1700,240 1770,246 1840,237 1980,238 2060,245 2130,238', '#cf70dc', 2.5);
        for (let x = 368; x < 2130; x += STEP) {
            out += line(x, 456, x, 473, '#b4b4b6', 5, `opacity="${Math.min(1, (x - 350) / 110)}"`);
        }
        out += [692, 1412, 2133].map(x => line(x, 456, x, 484, '#555', 6)).join('');
        out += text('20250703', 26, 555, 333, '#666', 75) + text('20250825', 525, 555, 336, '#666', 75) + text('20251028', 1250, 555, 325, '#666', 75) + text('20251223', 1812, 555, 320, '#666', 75);
        document.getElementById('fund').innerHTML = out;
    </script>
</body>

</html>
